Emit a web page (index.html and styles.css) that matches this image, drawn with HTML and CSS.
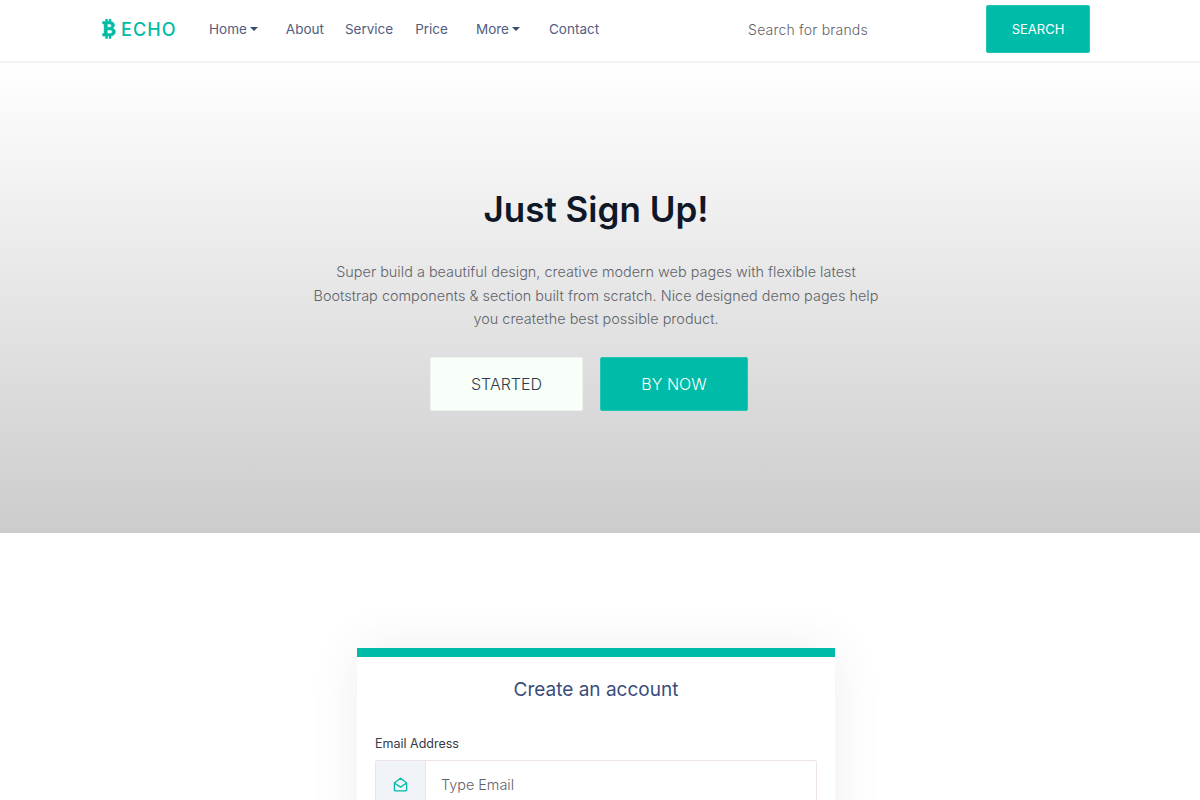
FILE: index.html
```html
<!DOCTYPE html>
<html lang="en">
<head>
<meta charset="utf-8">
<title>Echo - Sign Up</title>
<link rel="stylesheet" href="styles.css">
</head>
<body>
<header class="navbar">
  <a class="brand" href="#">
    <svg class="brand-icon" viewBox="0 0 14 20" width="14" height="20" aria-hidden="true">
      <path fill="currentColor" stroke="currentColor" stroke-width="0.5" fill-rule="evenodd" d="M3.600 0h1.900v2.300h1.600V0H9v2.500c2.200.4 3.500 1.700 3.500 3.600 0 1.400-.7 2.500-1.900 3.100 1.700.5 2.800 1.800 2.800 3.600 0 2.300-1.600 3.900-4.400 4.200v2.500H7.100v-2.400H5.500v2.400H3.600v-2.400H.6v-2.500h1.500V4.900H.6V2.400h3zM5.300 5v3.300h2.400c1 0 1.700-.6 1.700-1.600S8.700 5 7.700 5zm0 5.900v3.600h3c1.100 0 1.900-.7 1.900-1.800s-.8-1.800-1.900-1.800z"/>
    </svg>
    <span>ECHO</span>
  </a>
  <nav class="nav-links">
    <a class="nav-link nav-home caret" href="#">Home</a>
    <a class="nav-link nav-about" href="#">About</a>
    <a class="nav-link nav-service" href="#">Service</a>
    <a class="nav-link nav-price" href="#">Price</a>
    <a class="nav-link nav-more caret" href="#">More</a>
    <a class="nav-link" href="#">Contact</a>
  </nav>
  <form class="nav-search">
    <input class="nav-input" type="text" placeholder="Search for brands">
    <button class="btn btn-teal btn-search" type="button">SEARCH</button>
  </form>
</header>

<section class="hero">
  <h1 class="hero-title">Just Sign Up!</h1>
  <p class="hero-text">Super build a beautiful design, creative modern web pages with flexible latest Bootstrap components &amp; section built from scratch. Nice designed demo pages help you createthe best possible product.</p>
  <div class="hero-actions">
    <a class="btn btn-light btn-large" href="#">STARTED</a>
    <a class="btn btn-teal btn-large" href="#">BY NOW</a>
  </div>
</section>

<main class="signup">
  <form class="card">
    <h2 class="card-title">Create an account</h2>
    <label class="field-label" for="email">Email Address</label>
    <div class="input-group">
      <span class="input-icon">
        <svg viewBox="0 0 16 16" width="15" height="15" fill="none" stroke="currentColor" stroke-width="1.4" stroke-linejoin="round" stroke-linecap="round" aria-hidden="true">
          <path d="M1.500 6.300 8 1.300l6.500 5v7.200a1.200 1.200 0 0 1-1.200 1.200H2.700a1.200 1.200 0 0 1-1.200-1.200z"/>
          <path d="M1.800 6.700 8 10.800l6.200-4.100"/>
        </svg>
      </span>
      <input class="text-input" id="email" type="email" placeholder="Type Email">
    </div>
  </form>
</main>
</body>
</html>
```
FILE: styles.css
```css
* {
  box-sizing: border-box;
}

html,
body {
  margin: 0;
  height: 800px;
  overflow: hidden;
}

body {
  background: #fff;
  color: #3d4a6b;
  font-family: Inter, "Liberation Sans", sans-serif;
  font-size: 14px;
}

a {
  text-decoration: none;
}

.navbar {
  display: flex;
  align-items: center;
  height: 63px;
  padding: 0 110px 3px 102px;
  background: #fff;
  border-bottom: 2px solid #f3f1f3;
}

.brand {
  display: flex;
  align-items: center;
  gap: 5px;
  width: 107px;
  color: #00bba5;
  font-size: 18px;
  font-weight: 500;
  letter-spacing: 1.1px;
}

.brand-icon {
  flex: none;
}

.nav-links {
  display: flex;
  align-items: center;
}

.nav-link {
  color: #525d80;
  font-size: 13.500px;
  line-height: 20px;
}

.nav-home { margin-right: 28px; }
.nav-about { margin-right: 21px; }
.nav-service { margin-right: 22px; }
.nav-price { margin-right: 28px; }
.nav-more { margin-right: 29px; }

.caret::after {
  content: "";
  display: inline-block;
  margin-left: 3px;
  vertical-align: 3px;
  border-top: 4px solid #3d4a6b;
  border-left: 4px solid transparent;
  border-right: 4px solid transparent;
}

.nav-search {
  display: flex;
  align-items: center;
  flex: 1;
  justify-content: space-between;
  margin-left: 149px;
}

.nav-input {
  width: 200px;
  padding: 0;
  border: 0;
  outline: 0;
  background: transparent;
  color: #666;
  font-family: inherit;
  font-size: 14px;
  font-weight: 300;
  letter-spacing: 0.2px;
}

.nav-input::placeholder,
.text-input::placeholder {
  color: #5f6269;
  opacity: 1;
}

.btn {
  display: flex;
  align-items: center;
  justify-content: center;
  border: 1px solid #e6e9ec;
  border-radius: 2px;
  font-family: inherit;
}

.btn-teal {
  background: #00bba7;
  border-color: #22c5b2;
  color: #fff;
}

.btn-light {
  background: #f8fff8;
  border-color: #eef2ee;
  color: #2f3a4d;
}

.btn-search {
  width: 104px;
  height: 48px;
  font-size: 13px;
  font-weight: 400;
}

.btn-large {
  height: 54px;
  font-size: 16px;
  font-weight: 300;
}

.hero {
  display: flex;
  flex-direction: column;
  align-items: center;
  height: 470px;
  padding: 124px 8px 0 0;
  background: linear-gradient(180deg, #ffffff 0%, #cccccc 100%);
  text-align: center;
}

.hero-title {
  margin: 0 0 28px;
  color: #101828;
  font-size: 35px;
  font-weight: 600;
  line-height: 45px;
}

.hero-text {
  width: 570px;
  margin: 0 0 26px;
  color: #5f6369;
  font-size: 14.400px;
  font-weight: 300;
  letter-spacing: 0.03px;
  line-height: 23.500px;
}

.hero-actions {
  display: flex;
  gap: 17px;
  margin-right: 14px;
}

.hero-actions .btn-light {
  width: 153px;
}

.hero-actions .btn-teal {
  width: 148px;
}

.signup {
  display: flex;
  justify-content: center;
  padding: 115px 8px 0 0;
}

.card {
  width: 478px;
  height: 400px;
  padding: 22px 18px 0;
  background: #fff;
  border-top: 9px solid #00bba7;
  box-shadow: 0 0 50px rgba(0, 0, 0, 0.07);
}

.card-title {
  margin: 0 0 34px;
  color: #3a4d7d;
  font-size: 19px;
  font-weight: 400;
  line-height: 22px;
  text-align: center;
}

.field-label {
  display: block;
  margin-bottom: 8px;
  color: #343a46;
  font-size: 12.500px;
  line-height: 17px;
}

.input-group {
  display: flex;
  height: 48px;
  border: 1px solid #ece4e8;
  border-radius: 2px;
}

.input-icon {
  display: flex;
  align-items: center;
  justify-content: center;
  width: 50px;
  background: #f0f3f8;
  border-right: 1px solid #ece4e8;
  color: #00bba7;
}

.text-input {
  flex: 1;
  min-width: 0;
  padding: 0 15px;
  border: 0;
  outline: 0;
  background: transparent;
  font-family: inherit;
  font-size: 14.400px;
  font-weight: 300;
}
```
